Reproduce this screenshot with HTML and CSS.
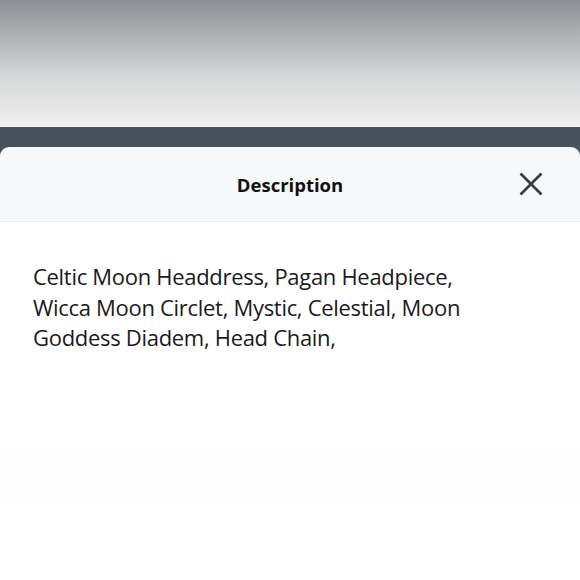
FILE: index.html
```html
<!DOCTYPE html>
<html>
<head>
<meta charset="utf-8">
<link rel="stylesheet" href="styles.css">
</head>
<body>
<div class="page">
  <div class="backdrop"></div>
  <div class="darkbar">
    <div class="sheet">
      <div class="sheet-header">
        <h1 class="title">Description</h1>
        <button class="close" aria-label="Close">
          <svg width="24" height="24" viewBox="0 0 24 24"><path d="M1.5 1.5 L22.5 22.5 M22.5 1.5 L1.5 22.5" stroke="#333b43" stroke-width="2.6" stroke-linecap="butt" fill="none"/></svg>
        </button>
      </div>
    </div>
  </div>
  <div class="sheet-body">
    <p class="desc">Celtic Moon Headdress, Pagan Headpiece, Wicca Moon Circlet, Mystic, Celestial, Moon Goddess Diadem, Head Chain,</p>
  </div>
</div>
</body>
</html>
```
FILE: styles.css
```css
* { box-sizing: border-box; }
html, body { margin: 0; padding: 0; background: #fff; }
body { font-family: "Open Sans", Lato, sans-serif; }
.page { width: 580px; height: 580px; overflow: hidden; display: flex; flex-direction: column; }
.backdrop {
  height: 127px;
  background: linear-gradient(180deg, #8c9094 0%, #b2b5b8 30%, #d5d7d8 60%, #efefef 100%);
  border-bottom: 1px solid #f6f6f6;
}
.darkbar { background: #47525a; padding-top: 20px; }
.sheet {
  background: #f7f8fa;
  border-radius: 9px 9px 0 0;
  border-bottom: 1px solid #ebecee;
}
.sheet-header {
  height: 74px;
  padding-top: 0;
  display: flex;
  align-items: center;
  justify-content: center;
  position: relative;
}
.title { margin: 0; font-size: 18.5px; font-weight: 700; color: #111; letter-spacing: 0; }
.close {
  position: absolute; right: 37px; top: 25px;
  width: 24px; height: 24px; padding: 0; border: 0; background: none; display: flex;
}
.sheet-body { flex: 1; background: linear-gradient(180deg, #ffffff 0%, #ffffff 62%, #fcfcfc 70%, #ffffff 80%); padding: 39px 80px 0 33px; }
.desc { margin: 0; font-size: 22px; line-height: 30.5px; color: #1a1a1a; letter-spacing: -0.3px; }
```
